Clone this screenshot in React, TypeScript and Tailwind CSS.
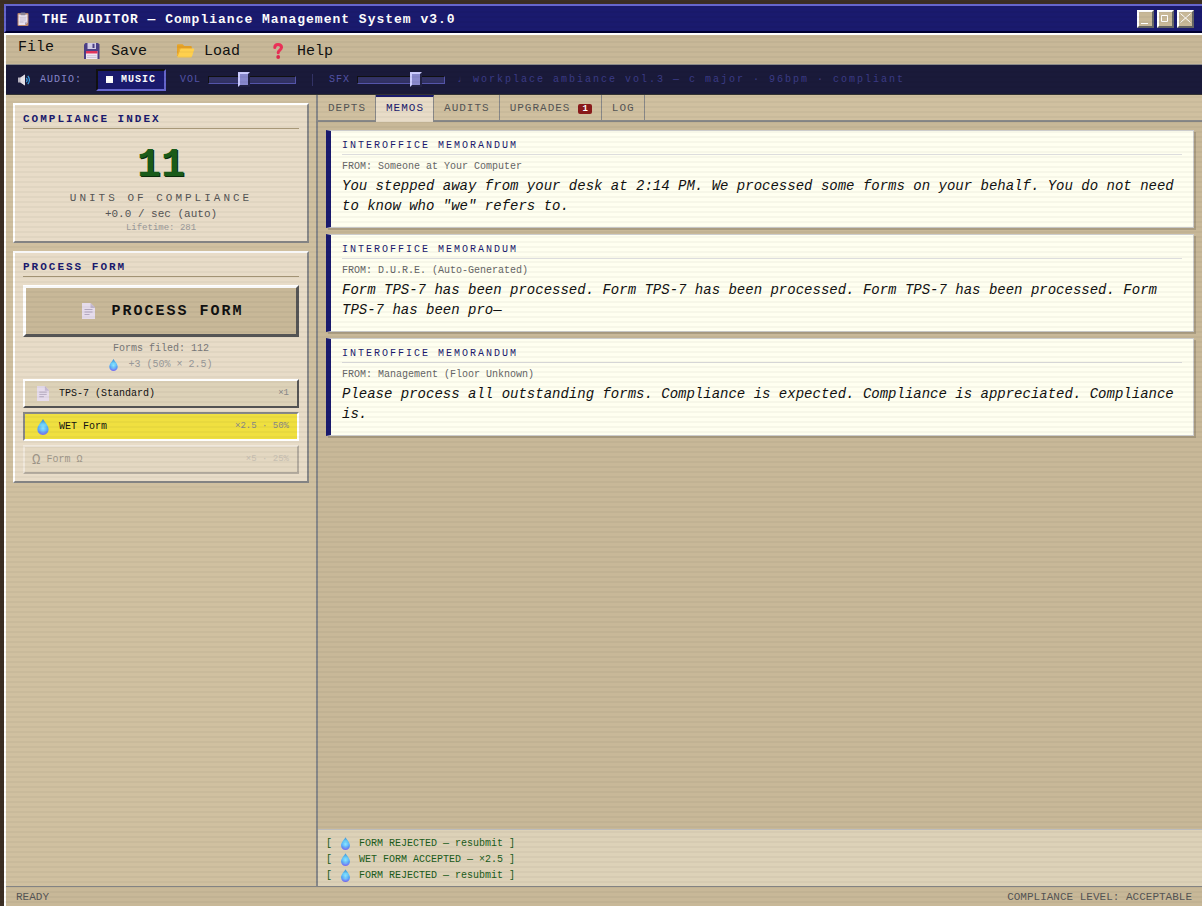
import React, { useState } from "react";

type IconProps = { className?: string };

const DropIcon = ({ className }: IconProps) => (
  <svg viewBox="0 0 12 17" className={className} aria-hidden="true">
    <defs>
      <linearGradient id="drop" x1="0" y1="0" x2="0" y2="1">
        <stop offset="0" stopColor="#3f8fd0" />
        <stop offset="0.35" stopColor="#5cc4fa" />
        <stop offset="0.7" stopColor="#5aa4fb" />
        <stop offset="1" stopColor="#7a6cf0" />
      </linearGradient>
      <radialGradient id="dropGlow" cx="0.5" cy="0.55" r="0.4">
        <stop offset="0" stopColor="#8be6ff" />
        <stop offset="1" stopColor="#8be6ff" stopOpacity="0" />
      </radialGradient>
    </defs>
    <path d="M6 0C4.500 3 0 7 0 11C0 14.600 2.600 17 6 17s6-2.400 6-6C12 7 7.500 3 6 0Z" fill="url(#drop)" />
    <path d="M6 0C4.500 3 0 7 0 11C0 14.600 2.600 17 6 17s6-2.400 6-6C12 7 7.500 3 6 0Z" fill="url(#dropGlow)" />
  </svg>
);

const PageIcon = ({ className }: IconProps) => (
  <svg viewBox="0 0 13 16" className={className} aria-hidden="true">
    <path d="M0 0h8.500L13 4.500V16H0Z" fill="#e6dcec" />
    <path d="M8.500 0L13 4.500V5H8.500Z" fill="#c4b8d0" />
    <path d="M2.500 6.500h8M2.500 9h8M2.500 11.500h5" stroke="#b3a8bf" strokeWidth="1" />
  </svg>
);

const ClipboardIcon = ({ className }: IconProps) => (
  <svg viewBox="0 0 12 14" className={className} aria-hidden="true">
    <rect x="0.500" y="1" width="11" height="13" rx="1" fill="#b98468" />
    <path d="M1.500 2.500h9v8l-2.500 2.500H1.500Z" fill="#e9e2f0" />
    <path d="M10.500 10.500L8 13v-2.500Z" fill="#a79db8" />
    <rect x="3.500" y="0.500" width="5" height="2.800" rx="0.800" fill="#8d8797" />
    <path d="M3 6h6M3 8h6M3 10h3.500" stroke="#b9b0c6" strokeWidth="0.700" />
  </svg>
);

const FloppyIcon = ({ className }: IconProps) => (
  <svg viewBox="0 0 20 16" className={className} aria-hidden="true">
    <path d="M2 1.500L3.500 0H16l1.500 1.500V16H2Z" fill="#4c3f86" />
    <rect x="5.500" y="0" width="8.500" height="6" fill="#d4cde6" />
    <rect x="10.500" y="0.800" width="2" height="4.200" fill="#4c3f86" />
    <rect x="4" y="8" width="11.500" height="8" fill="#f0e8f4" />
    <rect x="4" y="8" width="11.500" height="2.500" fill="#e8365e" />
    <path d="M5 12.500h9.500M5 14.500h9.500" stroke="#c9bfd6" strokeWidth="0.700" />
  </svg>
);

const FolderIcon = ({ className }: IconProps) => (
  <svg viewBox="0 0 20 16" className={className} aria-hidden="true">
    <path d="M2 2.500c0-.800.500-1.300 1.300-1.300h4.200L9.300 3h6.200c.800 0 1.300.500 1.300 1.300V13H2Z" fill="#e8a428" />
    <path d="M5.600 5.500h12.900c.600 0 .900.500.700 1.100L17 13.400c-.200.700-.700 1.100-1.400 1.100H2.200Z" fill="#ffd04e" />
    <path d="M2 13l3-7.500" stroke="#f2b63a" strokeWidth="0.800" />
  </svg>
);

const QuestionIcon = ({ className }: IconProps) => (
  <svg viewBox="0 0 20 16" className={className} aria-hidden="true">
    <path
      d="M6.800 4.600C6.800 2.700 8 1.600 10 1.600s3.500 1.100 3.500 3c0 2.400-3.300 2.700-3.300 5.200"
      fill="none"
      stroke="#ec3158"
      strokeWidth="3"
      strokeLinecap="round"
    />
    <circle cx="10.200" cy="14" r="1.900" fill="#e0294f" />
  </svg>
);

const SpeakerIcon = ({ className }: IconProps) => (
  <svg viewBox="0 0 12 12" className={className} aria-hidden="true">
    <path d="M0 3.500h2.500L7 0.500v11L2.500 8.500H0Z" fill="#b9b4c2" />
    <path d="M2.500 3.500L7 0.500v11L2.500 8.500Z" fill="#e6e2ea" />
    <path d="M8.300 3.800c1 1.300 1 3.100 0 4.400M9.800 1.800c2 2.600 2 5.800 0 8.400" fill="none" stroke="#3ba0e6" strokeWidth="1.200" />
  </svg>
);

const menuItems = [
  { label: "File", Icon: null },
  { label: "Save", Icon: FloppyIcon },
  { label: "Load", Icon: FolderIcon },
  { label: "Help", Icon: QuestionIcon },
];

const tabs = [
  { id: "depts", label: "DEPTS", badge: 0 },
  { id: "memos", label: "MEMOS", badge: 0 },
  { id: "audits", label: "AUDITS", badge: 0 },
  { id: "upgrades", label: "UPGRADES", badge: 1 },
  { id: "log", label: "LOG", badge: 0 },
];

const memos = [
  {
    from: "Someone at Your Computer",
    body: 'You stepped away from your desk at 2:14 PM. We processed some forms on your behalf. You do not need to know who "we" refers to.',
  },
  {
    from: "D.U.R.E. (Auto-Generated)",
    body: "Form TPS-7 has been processed. Form TPS-7 has been processed. Form TPS-7 has been processed. Form TPS-7 has been pro—",
  },
  {
    from: "Management (Floor Unknown)",
    body: "Please process all outstanding forms. Compliance is expected. Compliance is appreciated. Compliance is.",
  },
];

const ticker = [
  "FORM REJECTED — resubmit ]",
  "WET FORM ACCEPTED — ×2.5 ]",
  "FORM REJECTED — resubmit ]",
];

function Panel({ title, children }: { title: string; children: React.ReactNode }) {
  return (
    <section className="border-2 border-t-white border-r-[#888] border-b-[#888] border-l-white bg-[#e8dcc8] px-2 pt-1.5 pb-[7px]">
      <h2 className="border-b border-[#a89878] pb-px text-[11px] leading-4 font-bold tracking-[2px] text-[#1a1a6e]">
        {title}
      </h2>
      {children}
    </section>
  );
}

function Slider({ label, value, onChange }: { label: string; value: number; onChange: (v: number) => void }) {
  return (
    <label className="flex items-center gap-[7px] text-[#5555aa]">
      {label}
      <input
        type="range"
        min={0}
        max={100}
        value={value}
        onChange={(e) => onChange(Number(e.target.value))}
        className="h-2 w-[88px] appearance-none border border-t-[#111] border-r-[#5555aa] border-b-[#5555aa] border-l-[#111] bg-[#333366] [&::-webkit-slider-thumb]:h-[15px] [&::-webkit-slider-thumb]:w-3 [&::-webkit-slider-thumb]:appearance-none [&::-webkit-slider-thumb]:border-2 [&::-webkit-slider-thumb]:border-t-[#ccccff] [&::-webkit-slider-thumb]:border-r-[#222244] [&::-webkit-slider-thumb]:border-b-[#222244] [&::-webkit-slider-thumb]:border-l-[#ccccff] [&::-webkit-slider-thumb]:bg-[#8888cc]"
      />
    </label>
  );
}

export default function App() {
  const [tab, setTab] = useState("memos");
  const [form, setForm] = useState("wet");
  const [vol, setVol] = useState(39);
  const [sfx, setSfx] = useState(70);

  const raised = "border-t-white border-r-[#555] border-b-[#555] border-l-white bg-[#ddd2b8]";
  const pressed = "border-t-[#888] border-r-white border-b-white border-l-[#888] bg-[#f0e040]";

  return (
    <div className="flex h-screen flex-col bg-[#3c2f25] pt-1 pl-1 font-['Liberation_Mono','DejaVu_Sans',monospace] text-[#111]">
      {/* title bar */}
      <header className="flex h-[29px] shrink-0 items-center border-2 border-r-0 border-t-[#6666cc] border-b-[#000033] border-l-[#6666cc] bg-[#1a1a6e] pr-2 pl-2.5 text-white">
        <ClipboardIcon className="h-3.5 w-3.5" />
        <h1 className="ml-3 flex-1 pt-0.5 text-[13px] font-bold tracking-[1px]">
          THE AUDITOR — Compliance Management System v3.0
        </h1>
        <div className="flex gap-[3px]">
          {["minimize", "maximize", "close"].map((name) => (
            <button
              key={name}
              type="button"
              aria-label={name}
              className="flex h-[18px] w-[17px] items-center justify-center border-2 border-t-white border-r-[#666] border-b-[#666] border-l-white bg-[#c8b898]"
            >
              <svg viewBox="0 0 13 14" className="h-3.5 w-[13px] shrink-0" fill="none" stroke="#fff">
                {name === "minimize" && <path d="M2 11.500h7" />}
                {name === "maximize" && <path d="M2.500 3.500h6v6h-6Z" />}
                {name === "close" && <path d="M1.500 1.500l10 9M11.500 1.500l-10 9" />}
              </svg>
            </button>
          ))}
        </div>
      </header>

      <div className="flex min-h-0 flex-1 flex-col border-t-2 border-l-2 border-white bg-[#c8b898]">
        <nav className="flex h-[30px] shrink-0 items-start gap-7 border-b border-[#888] px-3 pt-px text-[15px] leading-6">
          {menuItems.map(({ label, Icon }) =>
            Icon ? (
              <button key={label} type="button" className="flex items-center gap-[9px] pt-1">
                <Icon className="mb-0.5 h-4 w-5" />
                {label}
              </button>
            ) : (
              <button key={label} type="button">
                {label}
              </button>
            ),
          )}
        </nav>

        {/* audio strip */}
        <div className="flex h-[30px] shrink-0 items-center border-b border-[#333] bg-[#1a1a3a] px-3 text-[10px] tracking-[1px]">
          <SpeakerIcon className="h-3 w-3" />
          <span className="ml-2.5 w-14 text-[#8888cc]">AUDIO:</span>
          <button
            type="button"
            className="flex h-[22px] w-[70px] items-center justify-center gap-2 border-2 border-t-[#111] border-r-[#6666cc] border-b-[#6666cc] border-l-[#111] bg-[#1a1a6e] font-bold text-white"
          >
            <span className="h-[7px] w-[7px] bg-white" />
            MUSIC
          </button>
          <div className="ml-3.5 flex items-center">
            <Slider label="VOL" value={vol} onChange={setVol} />
            <span className="mx-4 h-3 w-px bg-[#333366]" />
            <Slider label="SFX" value={sfx} onChange={setSfx} />
          </div>
          <span className="ml-3 tracking-[2px] text-[#3c3c88]">
            ♩ workplace ambiance vol.3 — c major · 96bpm · compliant
          </span>
        </div>

        <div className="flex min-h-0 flex-1">
          <aside className="flex w-[312px] shrink-0 flex-col gap-2 border-r-2 border-[#888] bg-[#d0c0a0] px-[7px] pt-2">
            <Panel title="COMPLIANCE INDEX">
              <div className="mt-3 text-center text-[11px] leading-4 text-[#555]">
                <p className="text-[40px] leading-[49px] font-bold text-[#1a5c1a] [text-shadow:1px_1px_0_#0a2e0a]">11</p>
                <p className="tracking-[3px]">UNITS OF COMPLIANCE</p>
                <p>+0.0 / sec (auto)</p>
                <p className="text-[9px] leading-3 text-[#999]">Lifetime: 281</p>
              </div>
            </Panel>

            <Panel title="PROCESS FORM">
              <button
                type="button"
                className="mt-2 flex h-[52px] w-full items-center justify-center gap-4 border-3 border-t-white border-r-[#555] border-b-[#555] border-l-white bg-[#c8b898] pt-0.5 pl-1 text-[15px] font-bold tracking-[2px]"
              >
                <PageIcon className="mb-0.5 h-4 w-[13px]" />
                PROCESS FORM
              </button>
              <div className="mt-1 text-center text-[10px] leading-4 text-[#777]">
                <p>Forms filed: 112</p>
                <p className="flex items-center justify-center gap-2.5 text-[#999]">
                  <DropIcon className="h-3 w-[9px]" />
                  +3 (50% × 2.5)
                </p>
              </div>
              <div className="mt-1.5 flex flex-col gap-1 text-[10px]">
                <button
                  type="button"
                  onClick={() => setForm("tps")}
                  className={`flex h-[29px] items-center border-2 pr-2 pl-3 ${form === "tps" ? pressed : raised}`}
                >
                  <PageIcon className="mr-2.5 h-[15px] w-3" />
                  TPS-7 (Standard)
                  <span className="ml-auto text-[9px] text-[#888]">×1</span>
                </button>
                <button
                  type="button"
                  onClick={() => setForm("wet")}
                  className={`flex h-[29px] items-center border-2 pr-2 pl-3 ${form === "wet" ? pressed : raised}`}
                >
                  <DropIcon className="mr-2.5 h-4 w-3" />
                  WET Form
                  <span className="ml-auto text-[9px] text-[#888]">×2.5 · 50%</span>
                </button>
                <button
                  type="button"
                  disabled
                  className="flex h-[29px] items-center border-2 border-t-white border-r-[#555] border-b-[#555] border-l-white bg-[#ddd2b8] pr-2 pl-[7px] opacity-35"
                >
                  <span className="mr-1.5 text-sm">Ω</span>
                  Form Ω
                  <span className="ml-auto text-[9px] text-[#888]">×5 · 25%</span>
                </button>
              </div>
            </Panel>
          </aside>

          <main className="flex min-w-0 flex-1 flex-col">
            <div role="tablist" className="flex h-[27px] shrink-0 border-b-2 border-[#888] bg-[#d0c0a0] text-[11px] tracking-[1px]">
              {tabs.map((t) => (
                <button
                  key={t.id}
                  type="button"
                  role="tab"
                  aria-selected={tab === t.id}
                  onClick={() => setTab(t.id)}
                  className={`flex items-center border-r border-[#888] pr-[9px] pl-2.5 ${
                    tab === t.id
                      ? "-mb-0.5 border-t-2 border-t-[#1a1a6e] bg-[#e8dcc8] pb-0.5 text-[#1a1a6e]"
                      : "pt-0.5 text-[#555]"
                  }`}
                >
                  {t.label}
                  {t.badge > 0 && (
                    <span className="ml-2 rounded-xs bg-[#8b1a1a] px-1 text-[9px] leading-[10px] font-bold tracking-normal text-white">
                      {t.badge}
                    </span>
                  )}
                </button>
              ))}
            </div>

            <div className="flex min-h-0 flex-1 flex-col gap-1.5 overflow-hidden p-2">
              {memos.map((m) => (
                <article
                  key={m.from}
                  className="border border-l-[5px] border-[#ccc] border-l-[#1a1a6e] bg-[#fffff0] px-[11px] pt-[7px] pb-[11px] shadow-[2px_2px_0_rgba(0,0,0,0.15)]"
                >
                  <h3 className="border-b border-[#ddd] pb-px text-[10px] leading-[15px] tracking-[2px] text-[#1a1a6e]">
                    INTEROFFICE MEMORANDUM
                  </h3>
                  <p className="mt-1 text-[10px] leading-[15px] text-[#666]">FROM: {m.from}</p>
                  <p className="mt-0.5 text-sm leading-5 italic">{m.body}</p>
                </article>
              ))}
            </div>

            <div className="border-t border-[#bbb] bg-[#ddd2b8] px-2 pt-1.5 pb-0.5 text-[10px] leading-4 text-[#1a5c1a]">
              {ticker.map((line, i) => (
                <p key={i} className="flex items-center">
                  [
                  <DropIcon className="mx-[9px] mb-0.5 h-[13px] w-[9px]" />
                  {line}
                </p>
              ))}
            </div>
          </main>
        </div>

        <footer className="flex h-5 shrink-0 items-center justify-between border-t border-[#888] px-2.5 pt-0.5 text-[11px] text-[#555]">
          <span>READY</span>
          <span>COMPLIANCE LEVEL: ACCEPTABLE</span>
        </footer>
      </div>

      {/* CRT scanlines */}
      <div className="pointer-events-none fixed inset-0 bg-[repeating-linear-gradient(0deg,transparent_0px,transparent_3px,rgba(0,0,0,0.03)_3px,rgba(0,0,0,0.03)_5px)]" />
    </div>
  );
}
